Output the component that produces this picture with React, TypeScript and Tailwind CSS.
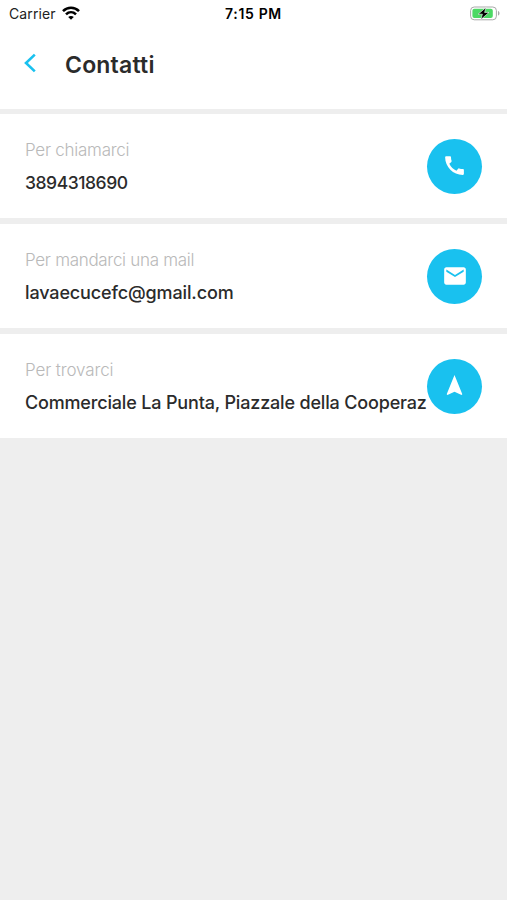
import type { ReactNode } from "react";
import { MdCall, MdEmail, MdNavigation } from "react-icons/md";

type ContactRowProps = {
  label: string;
  value: string;
  icon: ReactNode;
  labelClass: string;
  valueClass: string;
};

const StatusBar = () => (
  <div className="grid h-7 grid-cols-3 items-center pl-[9px] pr-[7px] text-black">
    <div className="flex items-center gap-[6px]">
      <span className="text-[14px] leading-none tracking-[0.1px] text-[#222]">Carrier</span>
      <svg className="-mt-[2px]" width="18" height="14" viewBox="0 0 18 14" fill="none" stroke="currentColor" strokeWidth="2.6">
        <path d="M1 5.1C5.6 0.6 12.4 0.6 17 5.1" />
        <path d="M4 8.4C6.9 5.6 11.1 5.6 14 8.4" />
        <path d="M9 13.8L6.2 11C7.8 9.6 10.2 9.6 11.8 11Z" fill="currentColor" stroke="none" />
      </svg>
    </div>
    <span className="-ml-[2px] text-center text-[14px] font-semibold leading-none tracking-[0.65px]">7:15 PM</span>
    <svg className="justify-self-end" width="30" height="16" viewBox="0 0 30 16">
      <rect x="0.6" y="1" width="25.8" height="12.8" rx="3.6" fill="#fff" stroke="#a9a9a9" />
      <rect x="2.4" y="2.8" width="20.4" height="9.2" rx="2" fill="#4cd964" />
      <path d="M28 5v4.6c2-.7 2-3.9 0-4.6Z" fill="#a9a9a9" />
      <path d="M16 1.4 8.2 8.2h4.2l-1.6 5.4L19 6.4h-4.4Z" fill="#000" stroke="#fff" strokeWidth="0.6" />
    </svg>
  </div>
);

const Header = () => (
  <header className="flex h-[81px] items-start pl-6 pt-[21px]">
    <svg className="mt-1" width="12" height="20" viewBox="0 0 12 20" fill="none" stroke="#19c1ef" strokeWidth="2.6">
      <path d="M10.8 1.6 2 10l8.8 8.4" />
    </svg>
    <h1 className="ml-[29px] text-[23px] font-semibold leading-8 tracking-[0.2px] text-[#2b2b2b]">Contatti</h1>
  </header>
);

const ContactRow = ({ label, value, icon, labelClass, valueClass }: ContactRowProps) => (
  <div className="flex h-[104px] items-start bg-white px-[25px] pt-[25px]">
    <div className="w-[402px] shrink-0 whitespace-nowrap">
      <p className={`text-[17px] font-light leading-[22px] text-[#b9b9b9] ${labelClass}`}>{label}</p>
      <p className={`mt-[10px] font-medium leading-6 text-[#2b2b2b] ${valueClass}`}>{value}</p>
    </div>
    <button className="flex size-[55px] shrink-0 items-center justify-center rounded-full bg-[#19c1ef] pb-[2px] text-white">
      {icon}
    </button>
  </div>
);

export default function App() {
  return (
    <main className="min-h-screen overflow-hidden bg-[#eeeeee] font-['Inter',sans-serif]">
      <div className="bg-white">
        <StatusBar />
        <Header />
      </div>
      <section className="mt-[5px] flex flex-col gap-[6px]">
        <ContactRow
          label="Per chiamarci"
          value="3894318690"
          icon={<MdCall size={25} />}
          labelClass="tracking-[-0.26px]"
          valueClass="text-[17.5px] tracking-[-0.45px]"
        />
        <ContactRow
          label="Per mandarci una mail"
          value="lavaecucefc@gmail.com"
          icon={<MdEmail size={26} />}
          labelClass="tracking-[-0.3px]"
          valueClass="text-[18px] tracking-[-0.13px]"
        />
        <ContactRow
          label="Per trovarci"
          value="Commerciale La Punta, Piazzale della Cooperaz"
          icon={<MdNavigation size={25} />}
          labelClass="tracking-[-0.13px]"
          valueClass="text-[18px] tracking-[-0.17px]"
        />
      </section>
    </main>
  );
}
